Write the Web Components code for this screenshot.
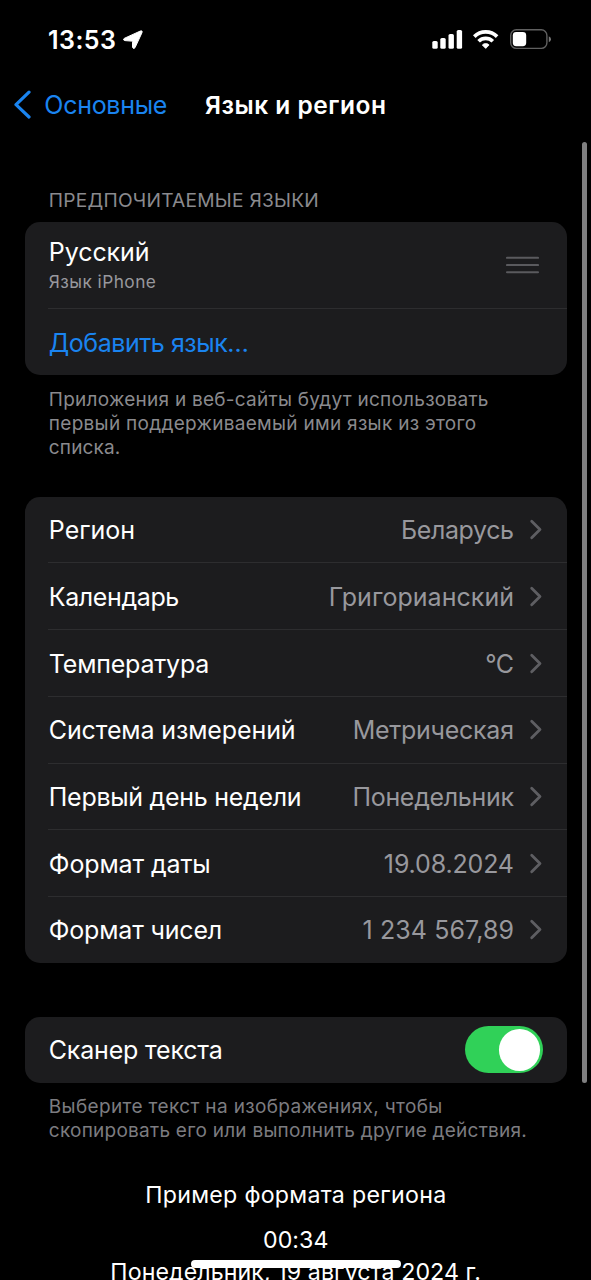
<!DOCTYPE html>
<html lang="ru">
<head>
<meta charset="utf-8">
<title>Язык и регион</title>
<style>
html,body{margin:0;padding:0;background:#000;height:1280px;overflow:hidden}
body{font-family:Inter,"Liberation Sans",sans-serif;color:#fff}
</style>
</head>
<body>
<settings-screen></settings-screen>
<script>
function define(name, html, setup) {
  const t = document.createElement('template');
  t.innerHTML = html;
  customElements.define(name, class extends HTMLElement {
    constructor() {
      super();
      this.attachShadow({mode: 'open'}).append(t.content.cloneNode(true));
    }
    connectedCallback() { if (setup) setup(this, this.shadowRoot); }
  });
}

/* One line of text whose tracking is set so that the glyphs span `w` pixels. */
const ctx = document.createElement('canvas').getContext('2d');
define('fit-text', `<style>:host{display:block;white-space:pre}</style><slot></slot>`, el => {
  const cs = getComputedStyle(el), s = el.textContent;
  ctx.font = `${cs.fontWeight} ${cs.fontSize} ${cs.fontFamily}`;
  const m = ctx.measureText(s);
  const ls = (+el.getAttribute('w') - m.actualBoundingBoxRight - m.actualBoundingBoxLeft) / (s.length - 1);
  el.style.letterSpacing = ls.toFixed(3) + 'px';
  el.style.marginRight = (-ls).toFixed(3) + 'px';
});

define('status-bar', `<style>
:host{display:flex;height:78px;box-sizing:border-box;padding:0 40px 0 48px;align-items:center;justify-content:space-between}
.l,.r{display:flex;align-items:center}
.l{font-size:25px;font-weight:600;line-height:30px;gap:6px;padding-top:2px}
svg{display:block}
</style>
<div class="l"><fit-text w="66">13:53</fit-text>
<svg width="22" height="22" viewBox="0 0 22 22"><path d="M2.2 9.4 18.4 2Q20.8 1.2 20 3.6L13 18.7Q11.3 20.6 10.5 18.2V13.1Q10.4 12.2 9.5 12.1L3 11.6Q.4 10.9 2.2 9.4Z" fill="#fff" stroke="#fff" stroke-width="1" stroke-linejoin="round"/></svg></div>
<div class="r"><svg width="119" height="22" viewBox="432 28 119 22">
<g fill="#fff"><rect x="432.3" y="41" width="5.4" height="7.8" rx="1.6"/><rect x="440.3" y="38" width="5.4" height="10.8" rx="1.6"/><rect x="448.5" y="34" width="5.4" height="14.8" rx="1.6"/><rect x="456.7" y="30" width="5.4" height="18.8" rx="1.6"/>
<path d="M482.3 45 485.7 48.4 489.1 45A4.8 4.8 0 0 0 482.3 45Z" stroke="#fff" stroke-width=".8" stroke-linejoin="round"/></g>
<g fill="none" stroke="#fff" stroke-width="3.7"><path d="M474.3 36.6A16.2 16.2 0 0 1 497.1 36.6"/><path d="M478.6 41.3A10.1 10.1 0 0 1 492.8 41.3"/></g>
<rect x="510.7" y="29.8" width="36.2" height="18.6" rx="5.6" fill="none" stroke="#606060" stroke-width="1.4"/>
<path d="M548.8 36.2Q551 37 551 39.2T548.8 42.2Z" fill="#777"/>
<rect x="512.8" y="32" width="13.4" height="14.2" rx="3.4" fill="#fff"/>
</svg></div>`);

define('nav-bar', `<style>
:host{display:flex;align-items:center;height:54px;padding-left:12.5px;line-height:30px;font-size:25px}
.back{display:flex;align-items:center;color:#1a84f0;gap:11.8px;width:192.5px}
svg{display:block}
.t{font-weight:600;font-size:24.5px}
</style>
<div class="back"><svg width="20" height="30" viewBox="0 0 20 30"><path d="M16 2.2 3 14.7 16 27" fill="none" stroke="#1a84f0" stroke-width="3.2" stroke-linecap="round" stroke-linejoin="round"/></svg><fit-text w="121.5">Основные</fit-text></div>
<fit-text class="t" w="180">Язык и регион</fit-text>`);

define('section-note', `<style>:host{display:block;padding-left:48.8px;font-size:19px;line-height:24.3px;color:#8a8a8e}</style><slot></slot>`);

define('card-group', `<style>:host{display:block;margin:0 24.5px;background:#1c1c1e;border-radius:15px;overflow:hidden}</style><slot></slot>`);

define('card-row', `<style>
:host{display:block;padding-left:23.5px}
.b{display:flex;align-items:center;justify-content:space-between;height:var(--h,66.7px);box-sizing:border-box;padding:var(--pt,1.4px) 23.5px 0 .8px;border-bottom:1.3px solid #2d2d2f;font-size:25px;line-height:30px;color:#fff}
:host(:last-child) .b{border-bottom-color:transparent}
</style><div class="b"><slot></slot><slot name="end"></slot></div>`);

define('row-value', `<style>
:host{display:flex;align-items:center;gap:15px;color:#98989d}
svg{display:block}
</style><slot></slot><svg width="14" height="22" viewBox="0 0 14 22"><path d="M2.7 2.3 11 10.5 2.7 18.7" fill="none" stroke="#5e5e62" stroke-width="2.8" stroke-linecap="round" stroke-linejoin="round"/></svg>`);

define('drag-handle', `<style>:host{display:block;margin-right:4px}svg{display:block}</style>
<svg width="33" height="18" viewBox="0 0 33 18"><path d="M1 1.8H32M1 9H32M1 16.2H32" stroke="#5a5a5e" stroke-width="2.1" stroke-linecap="round"/></svg>`);

define('toggle-switch', `<style>:host{display:flex;justify-content:flex-end;align-items:center;width:78px;height:47px;border-radius:24px;background:#30d158;box-sizing:border-box;padding-right:3px}
i{display:block;width:41.5px;height:41.5px;border-radius:50%;background:#fff}</style><i></i>`);

define('scroll-thumb', `<style>:host{display:block;position:absolute;left:582px;top:142px;width:4.6px;height:941px;border-radius:3px;background:#7f7f80}</style>`);
define('home-indicator', `<style>:host{display:block;position:absolute;left:190.5px;top:1260px;width:210.5px;height:8px;border-radius:4px;background:#fff}</style>`);

const rows = [['Регион',82.5,'Беларусь',110],['Календарь',127.5,'Григорианский',181.5],['Температура',158.5,'°C',26.5],['Система измерений',244,'Метрическая',157.5],['Первый день недели',249,'Понедельник',160],['Формат даты',159.5,'19.08.2024',128],['Формат чисел',171,'1 234 567,89',149]];

define('settings-screen', `<style>
:host{display:block;position:relative;width:591px;height:1280px;overflow:hidden;background:#000}
.head{margin-top:55.5px;font-size:19.2px}
.g1{margin-top:10.5px;height:153px}
.n1{margin-top:12.4px}
.g2{margin-top:36.2px;height:466.5px}
.g3{margin-top:53.5px;height:66px}
.n3{margin-top:12.2px;color:#7c7c80}
.sub{font-size:17.3px;line-height:22px;color:#98989d;margin-top:4px}
.blue{color:#1a84f0;padding-top:1px}
.ex{display:flex;flex-direction:column;align-items:center;font-size:23.2px;line-height:30px;padding-left:.4px}
.ex .a{margin-top:36.4px}.ex .b{margin-top:15.4px}.ex .c{margin-top:2px}
</style>
<status-bar></status-bar>
<nav-bar></nav-bar>
<section-note class="head"><fit-text w="267.5">ПРЕДПОЧИТАЕМЫЕ ЯЗЫКИ</fit-text></section-note>
<card-group class="g1">
<card-row style="--h:86.3px;--pt:0px"><div><fit-text w="97">Русский</fit-text><fit-text class="sub" w="107">Язык iPhone</fit-text></div><drag-handle slot="end"></drag-handle></card-row>
<card-row><fit-text class="blue" w="197.5">Добавить язык…</fit-text></card-row>
</card-group>
<section-note class="n1"><fit-text w="438">Приложения и веб-сайты будут использовать</fit-text><fit-text w="426">первый поддерживаемый ими язык из этого</fit-text><fit-text w="70">списка.</fit-text></section-note>
<card-group class="g2">${rows.map(r => `<card-row><fit-text w="${r[1]}">${r[0]}</fit-text><row-value slot="end"><fit-text w="${r[3]}">${r[2]}</fit-text></row-value></card-row>`).join('')}</card-group>
<card-group class="g3"><card-row style="--h:66px"><fit-text w="172">Сканер текста</fit-text><toggle-switch slot="end"></toggle-switch></card-row></card-group>
<section-note class="n3"><fit-text w="391.5">Выберите текст на изображениях, чтобы</fit-text><fit-text w="476.5">скопировать его или выполнить другие действия.</fit-text></section-note>
<div class="ex"><fit-text class="a" w="298">Пример формата региона</fit-text><fit-text class="b" w="63.5">00:34</fit-text><fit-text class="c" w="367">Понедельник, 19 августа 2024 г.</fit-text></div>
<scroll-thumb></scroll-thumb>
<home-indicator></home-indicator>`);
</script>
</body>
</html>
